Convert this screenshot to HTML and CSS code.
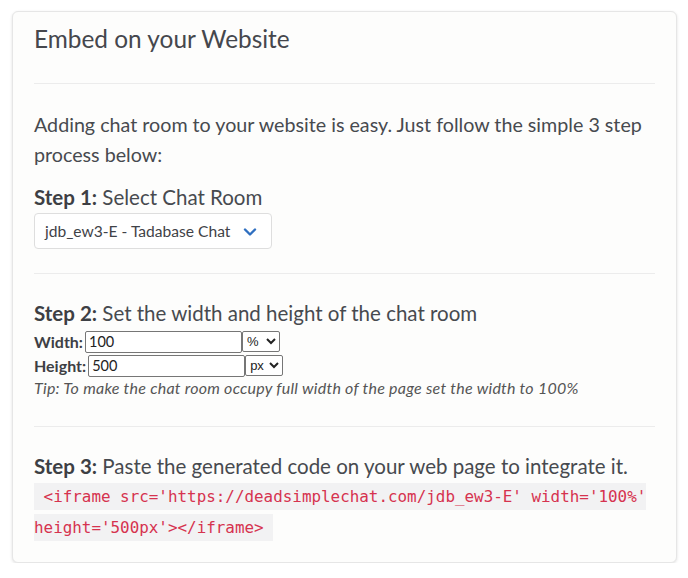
FILE: index.html
```html
<!DOCTYPE html>
<html>
<head>
<meta charset="utf-8">
<link rel="stylesheet" href="styles.css">
</head>
<body>
<div class="card">
  <h2 class="title">Embed on your Website</h2>
  <hr class="sep sep-top">
  <p class="intro">Adding chat room to your website is easy. Just follow the simple 3 step process below:</p>
  <div class="step"><b>Step 1:</b> Select Chat Room</div>
  <div class="room-select">
    <span>jdb_ew3-E - Tadabase Chat</span>
    <svg class="chev" width="14" height="10" viewBox="0 0 14 10"><path d="M2 2.5 L7 7.5 L12 2.5" fill="none" stroke="#2f6fc0" stroke-width="2.4" stroke-linecap="round" stroke-linejoin="round"/></svg>
  </div>
  <hr class="sep sep-mid">
  <div class="step"><b>Step 2:</b> Set the width and height of the chat room</div>
  <div class="dim-row"><b class="dim-label">Width:</b><input class="dim-input" type="text" value="100"><select class="dim-unit"><option>%</option></select></div>
  <div class="dim-row"><b class="dim-label">Height:</b><input class="dim-input" type="text" value="500"><select class="dim-unit"><option>px</option></select></div>
  <div class="tip">Tip: To make the chat room occupy full width of the page set the width to 100%</div>
  <hr class="sep sep-low">
  <div class="step"><b>Step 3:</b> Paste the generated code on your web page to integrate it.</div>
  <div class="code-wrap"><code class="code">&nbsp;&lt;iframe src='https://deadsimplechat.com/jdb_ew3-E' width='100%' height='500px'&gt;&lt;/iframe&gt;&nbsp;</code></div>
</div>
</body>
</html>
```
FILE: styles.css
```css
html, body {
  margin: 0;
  padding: 0;
  background: #ffffff;
}
body {
  font-family: "Lato", "Noto Sans", sans-serif;
  color: #474a4f;
}
.card {
  margin: 11px 11px 0 12px;
  padding: 12px 21px 20px;
  background: #fdfdfc;
  border: 1px solid #e6e6e6;
  border-radius: 6px;
  box-shadow: 0 1px 3px rgba(0, 0, 0, 0.12);
}
.title {
  margin: 0;
  font-size: 24.4px;
  line-height: 30px;
  font-weight: 400;
  color: #45474d;
}
.sep {
  border: 0;
  border-top: 1px solid #ececec;
  margin: 0;
}
.sep-top { margin-top: 29px; margin-bottom: 26px; }
.sep-mid { margin-top: 24px; margin-bottom: 24px; }
.sep-low { margin-top: 27px; margin-bottom: 24px; }
.intro {
  margin: 0;
  font-size: 19.7px;
  line-height: 30px;
}
.step {
  font-size: 20.5px;
  line-height: 30px;
}
.intro + .step { margin-top: 12px; }
.step b { font-weight: 700; color: #3d3f44; }
.room-select {
  margin-top: 1px;
  border: 1px solid #dedede;
  border-radius: 4px;
  background: #fff;
  display: flex;
  align-items: center;
  justify-content: space-between;
  padding: 0 14px 0 10px;
  box-sizing: border-box;
  width: 238px;
  height: 36px;
  font-size: 15.6px;
  color: #3f4247;
}
.chev { margin-top: 1px; }
.dim-row {
  display: flex;
  align-items: center;
  height: 23px;
  margin-top: 2px;
}
.dim-row + .dim-row { margin-top: 1px; }
.dim-label {
  font-size: 16px;
  font-weight: 700;
  color: #3d3f44;
  margin-right: 2px;
}
.dim-input {
  width: 157px;
  height: 22px;
  box-sizing: border-box;
  border: 1px solid #767676;
  border-radius: 2px;
  padding: 1px 3px;
  font-family: "Lato", sans-serif;
  font-size: 14.5px;
  color: #222;
  background: #fff;
}
.dim-unit {
  width: 38px;
  height: 21px;
  font-family: "Liberation Sans", sans-serif;
  font-size: 13px;
  color: #222;
  border: 1px solid #767676;
  border-radius: 2px;
  background: #fff;
}
.tip {
  font-size: 16px;
  letter-spacing: 0.25px;
  font-style: italic;
  line-height: 22px;
  color: #555;
}
.code-wrap {
  line-height: 29.5px;
  margin-top: 0;
}
.code {
  font-family: "DejaVu Sans Mono", monospace;
  font-size: 15.9px;
  color: #d6334f;
  background: #f2f2f3;
  padding: 4px 0;
  word-break: break-word;
}
```
